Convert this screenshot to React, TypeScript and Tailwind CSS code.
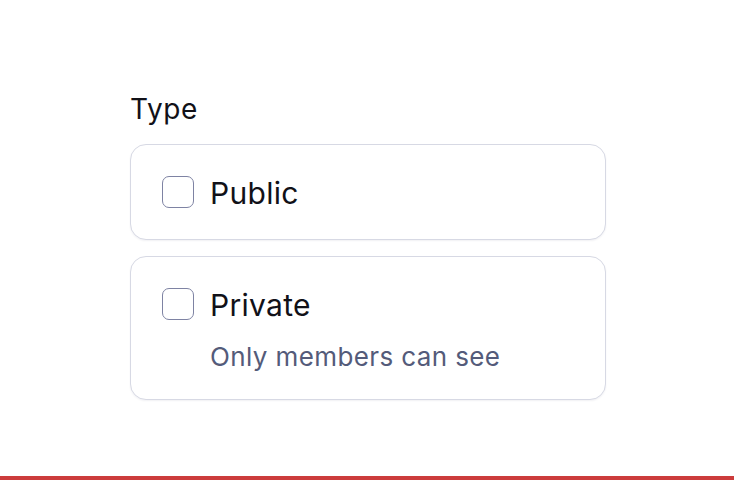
const font = { fontFamily: "Inter, 'Noto Sans', sans-serif" };

function Checkbox() {
  return <span className="block h-8 w-8 shrink-0 rounded-[7px] border border-[#7e83a3] bg-white" />;
}

function Option(props: { label: string; hint?: string }) {
  return (
    <label
      className={`flex cursor-pointer items-start gap-4 rounded-2xl border border-[#d7d9e4] bg-white pl-[31px] pr-8 pt-[31px] shadow-[0_1px_2px_rgba(20,24,60,0.06)] ${
        props.hint ? "pb-[27px]" : "pb-[29px]"
      }`}
    >
      <Checkbox />
      <div className="flex flex-col">
        <span className="text-[30px] leading-[34px] tracking-[0.01em] text-[#111118]">{props.label}</span>
        {props.hint ? (
          <span className="mt-[20px] text-[26px] leading-[30px] tracking-[0.015em] text-[#545b7a]">
            {props.hint}
          </span>
        ) : null}
      </div>
    </label>
  );
}

export default function App() {
  return (
    <div className="flex h-[480px] w-full flex-col bg-white" style={font}>
      <div className="flex flex-1 flex-col px-[130px] pt-[92px]">
        <div className="w-[476px]">
          <p className="mb-[18px] text-[28px] leading-[34px] tracking-[0.02em] text-[#111118]">Type</p>
          <div className="flex flex-col gap-4">
            <Option label="Public" />
            <Option label="Private" hint="Only members can see" />
          </div>
        </div>
      </div>
      <div className="h-1 w-full bg-[#cc3c3c]" />
    </div>
  );
}
